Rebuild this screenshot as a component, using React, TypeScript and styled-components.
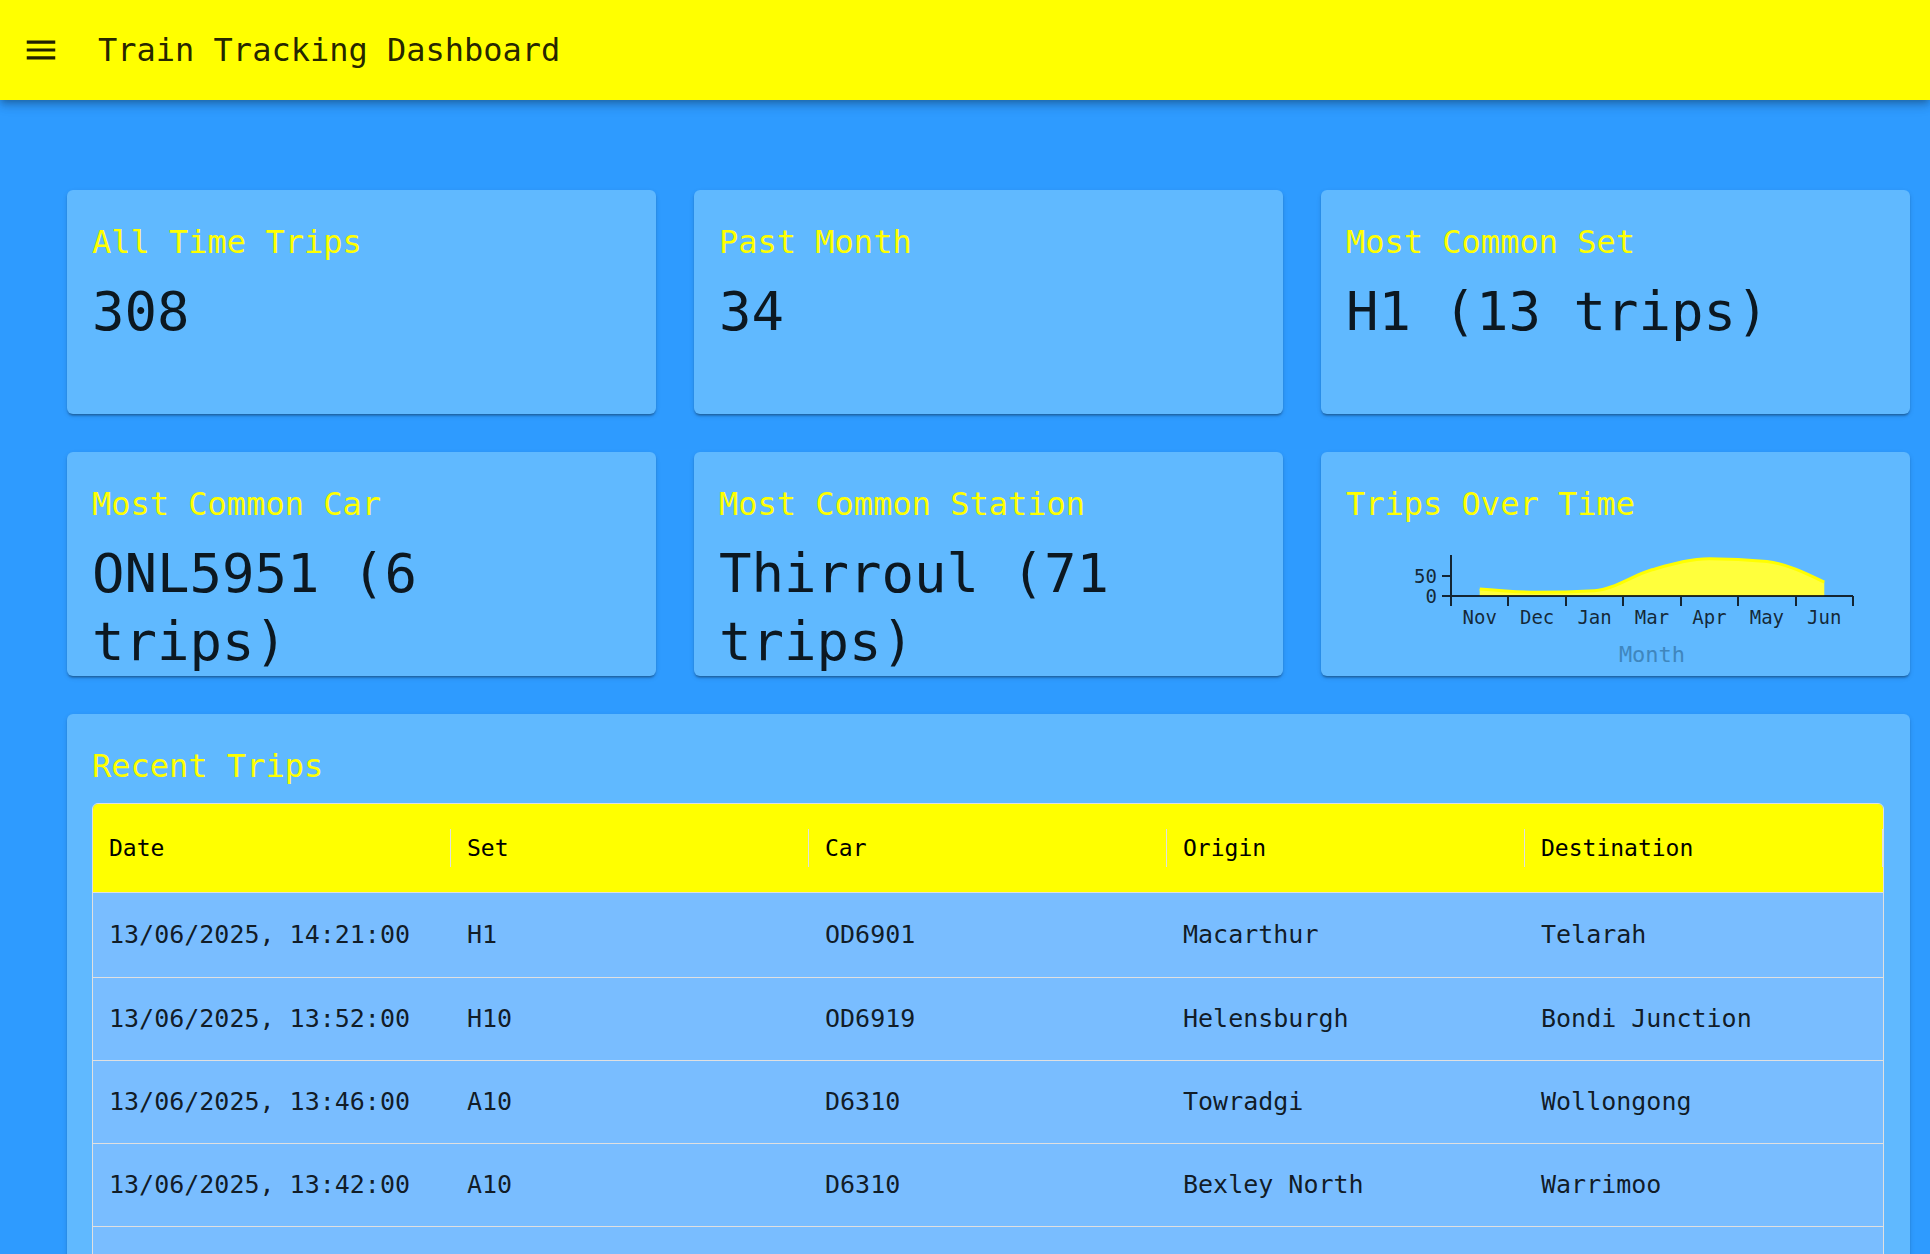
import React from "react";
import styled, { createGlobalStyle } from "styled-components";

const colors = {
  accent: "#ffff00",
  page: "#2e9bff",
  card: "#60b9ff",
  row: "#79bdff",
  line: "#e0e0e0",
  text: "rgba(0, 0, 0, 0.87)",
};

const GlobalStyle = createGlobalStyle`
  *, *::before, *::after { box-sizing: border-box; }
  body {
    margin: 0;
    background: ${colors.page};
    color: ${colors.text};
    font-family: "DejaVu Sans Mono", "Liberation Mono", monospace;
  }
`;

const Shell = styled.div`
  display: flex;
  flex-direction: column;
  height: 100vh;
  overflow: hidden;
`;

const AppBar = styled.header`
  position: relative;
  z-index: 1;
  flex: none;
  display: flex;
  align-items: center;
  gap: 38px;
  height: 100px;
  padding: 0 22px;
  background: ${colors.accent};
  box-shadow: 0 3px 6px -2px rgba(0, 0, 0, 0.2), 0 6px 8px rgba(0, 0, 0, 0.14),
    0 2px 16px rgba(0, 0, 0, 0.12);
`;

const MenuButton = styled.button`
  display: flex;
  padding: 0;
  border: 0;
  background: none;
  color: inherit;
  cursor: pointer;

  svg {
    width: 38px;
    height: 38px;
    fill: currentColor;
  }
`;

const AppTitle = styled.h1`
  margin: 0;
  font-size: 32px;
  font-weight: 400;
  line-height: 48px;
`;

const Main = styled.main`
  display: grid;
  grid-template-columns: repeat(3, minmax(0, 1fr));
  gap: 38px;
  padding: 90px 20px 38px 67px;
`;

const Card = styled.section<{ $wide?: boolean }>`
  display: flex;
  flex-direction: column;
  gap: ${(p) => (p.$wide ? 11 : 10)}px;
  grid-column: ${(p) => (p.$wide ? "1 / -1" : "auto")};
  height: ${(p) => (p.$wide ? "auto" : "224px")};
  padding: 27px 26px ${(p) => (p.$wide ? 25 : 0)}px 25px;
  border-radius: 6px;
  background: ${colors.card};
  box-shadow: 0 3px 2px -2px rgba(0, 0, 0, 0.2), 0 2px 2px rgba(0, 0, 0, 0.14),
    0 2px 5px rgba(0, 0, 0, 0.12);
`;

const CardTitle = styled.h2`
  margin: 0;
  color: ${colors.accent};
  font-size: 32px;
  font-weight: 400;
  line-height: 51px;
`;

const CardValue = styled.p`
  margin: 0;
  font-size: 54px;
  line-height: 68px;
`;

const ChartSvg = styled.svg`
  display: block;
  width: 100%;
  font-size: 19px;
  fill: rgba(0, 0, 0, 0.8);
`;

const AxisLine = styled.path`
  fill: none;
  stroke: rgba(0, 0, 0, 0.8);
  stroke-width: 2px;
`;

const AxisLabel = styled.text`
  font-size: 22px;
  fill: #3f86bd;
`;

const TableFrame = styled.div`
  overflow: hidden;
  border: 1px solid ${colors.line};
  border-radius: 6px;
`;

const Table = styled.table`
  width: 100%;
  table-layout: fixed;
  border-collapse: separate;
  border-spacing: 0;
`;

const HeadCell = styled.th`
  position: relative;
  height: 89px;
  padding: 0 16px;
  border-bottom: 1px solid ${colors.line};
  background: ${colors.accent};
  color: #000;
  font-size: 23px;
  font-weight: 400;
  text-align: left;

  &::after {
    content: "";
    position: absolute;
    top: 25px;
    right: 0;
    width: 1px;
    height: 38px;
    background: ${colors.line};
  }
`;

const Cell = styled.td`
  height: 83px;
  padding: 0 16px 2px;
  border-bottom: 1px solid ${colors.line};
  background: ${colors.row};
  font-size: 25px;
  white-space: nowrap;

  tr:first-child > & {
    height: 85px;
  }
`;

const stats = [
  { title: "All Time Trips", value: "308" },
  { title: "Past Month", value: "34" },
  { title: "Most Common Set", value: "H1 (13 trips)" },
  { title: "Most Common Car", value: "ONL5951 (6 trips)" },
  { title: "Most Common Station", value: "Thirroul (71 trips)" },
];

const columns = ["Date", "Set", "Car", "Origin", "Destination"];

const trips = [
  ["13/06/2025, 14:21:00", "H1", "OD6901", "Macarthur", "Telarah"],
  ["13/06/2025, 13:52:00", "H10", "OD6919", "Helensburgh", "Bondi Junction"],
  ["13/06/2025, 13:46:00", "A10", "D6310", "Towradgi", "Wollongong"],
  ["13/06/2025, 13:42:00", "A10", "D6310", "Bexley North", "Warrimoo"],
  ["", "", "", "", ""],
];

const monthly = [
  { month: "Nov", trips: 17 },
  { month: "Dec", trips: 9 },
  { month: "Jan", trips: 13 },
  { month: "Mar", trips: 64 },
  { month: "Apr", trips: 91 },
  { month: "May", trips: 84 },
  { month: "Jun", trips: 34 },
];

const plot = { left: 105, right: 507, top: 15, base: 56, max: 100 };

/** Cubic path through the points that never overshoots between them. */
function monotonePath(points: { x: number; y: number }[]): string {
  const n = points.length;
  const slopes = points
    .slice(1)
    .map((p, i) => (p.y - points[i].y) / (p.x - points[i].x));
  const tangents = new Array<number>(n).fill(0);
  for (let i = 1; i < n - 1; i++) {
    const a = slopes[i - 1];
    const b = slopes[i];
    tangents[i] =
      (Math.sign(a) + Math.sign(b)) *
      Math.min(Math.abs(a), Math.abs(b), Math.abs(a + b) / 4);
  }
  tangents[0] = (3 * slopes[0] - tangents[1]) / 2;
  tangents[n - 1] = (3 * slopes[n - 2] - tangents[n - 2]) / 2;

  let d = `M${points[0].x},${points[0].y}`;
  for (let i = 1; i < n; i++) {
    const p = points[i - 1];
    const q = points[i];
    const dx = (q.x - p.x) / 3;
    d += `C${p.x + dx},${p.y + dx * tangents[i - 1]} ${q.x - dx},${
      q.y - dx * tangents[i]
    } ${q.x},${q.y}`;
  }
  return d;
}

function TripsChart() {
  const step = (plot.right - plot.left) / monthly.length;
  const yOf = (value: number) =>
    plot.base - (value / plot.max) * (plot.base - plot.top);
  const points = monthly.map((m, i) => ({
    x: plot.left + step * (i + 0.5),
    y: yOf(m.trips),
  }));
  const curve = monotonePath(points);
  const area = `${curve}V${plot.base}H${points[0].x}Z`;
  const bands = Array.from(
    { length: monthly.length + 1 },
    (_, i) => `M${Math.round(plot.left + step * i)},${plot.base}v10`
  ).join("");

  return (
    <ChartSvg viewBox="0 0 538 136" role="img" aria-label="Trips Over Time">
      <path d={area} fill="#ffff3c" />
      <path d={curve} fill="none" stroke={colors.accent} strokeWidth={3} />
      <AxisLine
        d={`M${plot.left},${plot.top}V${plot.base}H${plot.right}${bands}M${
          plot.left
        },${yOf(0)}h-9M${plot.left},${Math.round(yOf(50))}h-9`}
      />
      {[0, 50].map((tick) => (
        <text key={tick} x={plot.left - 14} y={yOf(tick) + 7} textAnchor="end">
          {tick}
        </text>
      ))}
      {monthly.map((m, i) => (
        <text key={m.month} x={points[i].x} y={84} textAnchor="middle">
          {m.month}
        </text>
      ))}
      <AxisLabel x={(plot.left + plot.right) / 2} y={122} textAnchor="middle">
        Month
      </AxisLabel>
    </ChartSvg>
  );
}

export default function App() {
  return (
    <Shell>
      <GlobalStyle />
      <AppBar>
        <MenuButton type="button" aria-label="Menu">
          <svg viewBox="0 0 24 24" aria-hidden="true">
            <path d="M3 18h18v-2H3v2zm0-5h18v-2H3v2zm0-7v2h18V6H3z" />
          </svg>
        </MenuButton>
        <AppTitle>Train Tracking Dashboard</AppTitle>
      </AppBar>
      <Main>
        {stats.map((stat) => (
          <Card key={stat.title}>
            <CardTitle>{stat.title}</CardTitle>
            <CardValue>{stat.value}</CardValue>
          </Card>
        ))}
        <Card>
          <CardTitle>Trips Over Time</CardTitle>
          <TripsChart />
        </Card>
        <Card $wide>
          <CardTitle>Recent Trips</CardTitle>
          <TableFrame>
            <Table>
              <thead>
                <tr>
                  {columns.map((name) => (
                    <HeadCell key={name} scope="col">
                      {name}
                    </HeadCell>
                  ))}
                </tr>
              </thead>
              <tbody>
                {trips.map((trip, row) => (
                  <tr key={row}>
                    {trip.map((value, i) => (
                      <Cell key={columns[i]}>{value}</Cell>
                    ))}
                  </tr>
                ))}
              </tbody>
            </Table>
          </TableFrame>
        </Card>
      </Main>
    </Shell>
  );
}
